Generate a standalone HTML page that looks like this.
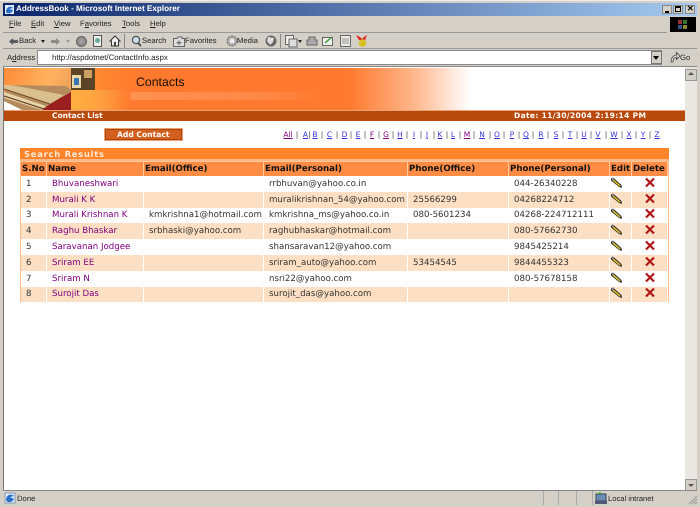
<!DOCTYPE html>
<html><head><meta charset="utf-8"><title>AddressBook</title>
<style>
html,body{margin:0;padding:0;width:700px;height:507px;overflow:hidden;background:#d4d0c8}
body{position:relative;font-family:"Liberation Sans",sans-serif;font-size:7.7px;color:#222;text-rendering:geometricPrecision}
#w{position:absolute;left:0;top:0;width:700px;height:507px;filter:blur(.3px)}
.a{position:absolute}
.t{position:absolute;white-space:nowrap;line-height:10px}
.v{font-family:"DejaVu Sans",sans-serif}
.l{position:absolute;top:130px;font:7.5px/10px "DejaVu Sans",sans-serif;color:#3333dd;text-decoration:underline;transform:translateX(-50%)}
.p{color:#800080}
.s{position:absolute;top:130px;font:7.5px/10px "DejaVu Sans",sans-serif;color:#444;transform:translateX(-50%)}
table{position:absolute;left:21px;top:161px;width:647px;border-collapse:separate;border-spacing:0;table-layout:fixed;font:8.65px "DejaVu Sans",sans-serif;color:#333}
th{background:#ff8c44;color:#111;height:14px;padding:0 0 0 1px;text-align:left;font-size:8.65px;font-weight:bold;border-right:1px solid #ffc79a;border-top:1px solid #ffc79a;white-space:nowrap;overflow:hidden}
td{height:15.8px;padding:0 0 0 5px;border-right:1px solid #fff;white-space:nowrap;overflow:hidden;box-sizing:border-box}
tr.o td{background:#fff}tr.e td{background:#fde0c3}
td.n{color:#800080}
td.i{padding:0;position:relative}
td svg{display:block}
</style></head><body><div id="w">
<svg width="0" height="0" style="position:absolute"><defs>
<symbol id="pen" viewBox="0 0 14 14"><path d="M1 1.5 L3 .5 L11.5 8 L12 11 L9 10 L1 3.5Z" fill="#333"/><path d="M3.5 2.5 L10.5 8.5 L9.5 9.5 L2.5 3.5Z" fill="#e8c820"/><path d="M1.5 2 L3 1 L4 2 L2.5 3Z" fill="#9ab"/></symbol>
<symbol id="del" viewBox="0 0 36 14"><path d="M14 1.5 L22 9.5 M22 1.5 L14 9.5" stroke="#b01818" stroke-width="2.2"/></symbol>
</defs></svg>
<!-- window frame -->
<div class="a" style="left:0;top:0;width:700px;height:1px;background:#eee"></div>
<div class="a" style="left:3px;top:3px;width:694px;height:13px;background:linear-gradient(90deg,#0a246a,#a6caf0)"></div>
<svg class="a" style="left:4px;top:4px" width="11" height="11" viewBox="0 0 11 11"><rect x="1" y="1" width="9" height="9" fill="#dfeefc"/><path d="M2 8 C2 3 7 1 9 4 L5 5 L9 6 C8 10 3 10 2 8Z" fill="#2a6fc9"/></svg>
<div class="t" style="left:16px;top:4px;color:#fff;font-weight:bold;font-size:8.15px">AddressBook - Microsoft Internet Explorer</div>
<div class="a" style="left:662px;top:5px;width:10px;height:9px;background:#d4d0c8;border:1px solid #888;box-sizing:border-box"><div class="a" style="left:2px;top:5px;width:4px;height:2px;background:#000"></div></div>
<div class="a" style="left:673px;top:5px;width:10px;height:9px;background:#d4d0c8;border:1px solid #888;box-sizing:border-box"><div class="a" style="left:1px;top:0;width:6px;height:6px;border:1px solid #000;border-top-width:2px;box-sizing:border-box"></div></div>
<div class="a" style="left:685px;top:5px;width:10px;height:9px;background:#d4d0c8;border:1px solid #888;box-sizing:border-box"></div>
<div class="t" style="left:687px;top:4px;font-size:8px;font-weight:bold;color:#000">✕</div>

<!-- menu -->
<div class="t" style="left:9px;top:19px"><u>F</u>ile</div>
<div class="t" style="left:31px;top:19px"><u>E</u>dit</div>
<div class="t" style="left:54px;top:19px"><u>V</u>iew</div>
<div class="t" style="left:80px;top:19px">F<u>a</u>vorites</div>
<div class="t" style="left:122px;top:19px"><u>T</u>ools</div>
<div class="t" style="left:150px;top:19px"><u>H</u>elp</div>
<div class="a" style="left:3px;top:32px;width:664px;height:1px;background:#999"></div>
<div class="a" style="left:670px;top:17px;width:26px;height:15px;background:#000"></div>
<div class="a" style="left:678px;top:20px;width:4px;height:4px;background:#933"></div>
<div class="a" style="left:683px;top:20px;width:4px;height:4px;background:#373"></div>
<div class="a" style="left:678px;top:25px;width:4px;height:4px;background:#358"></div>
<div class="a" style="left:683px;top:25px;width:4px;height:4px;background:#883"></div>

<!-- toolbar -->
<svg class="a" style="left:9px;top:37px" width="10" height="9"><path d="M0 4.5 L4 1 V3 H9 V6 H4 V8Z" fill="#555" stroke="#89a" stroke-width=".4"/></svg>
<div class="t" style="left:19px;top:36px">Back</div>
<div class="a" style="left:41px;top:40px;border:2.5px solid transparent;border-top:3px solid #222"></div>
<svg class="a" style="left:51px;top:37px" width="10" height="9"><path d="M9 4.5 L5 1 V3 H0 V6 H5 V8Z" fill="#8a8a88"/></svg>
<div class="a" style="left:66px;top:40px;border:2.5px solid transparent;border-top:3px solid #999"></div>
<div class="a" style="left:76px;top:36px;width:11px;height:11px;border-radius:50%;background:radial-gradient(#aaa,#777);border:1px solid #666;box-sizing:border-box"></div>
<div class="a" style="left:93px;top:35px;width:9px;height:12px;background:#eee;border:1px solid #555;box-sizing:border-box"></div>
<div class="a" style="left:95px;top:38px;width:5px;height:5px;background:#6a9;border-radius:50%"></div>
<svg class="a" style="left:109px;top:35px" width="12" height="12"><path d="M1 6 L6 1 L11 6 H9.5 V11 H2.5 V6Z" fill="#eee" stroke="#333"/><rect x="5" y="7" width="2" height="4" fill="#444"/></svg>
<div class="a" style="left:124px;top:34px;width:1px;height:14px;background:#888"></div>
<svg class="a" style="left:130px;top:35px" width="12" height="12"><circle cx="6" cy="5" r="3.6" fill="#cde" stroke="#555" stroke-width="1.3"/><path d="M8 8 L11 11" stroke="#555" stroke-width="2"/></svg>
<div class="t" style="left:142px;top:36px">Search</div>
<svg class="a" style="left:173px;top:36px" width="12" height="11"><path d="M.5 2.5 H4 L5 1 H9 V2.5 H11.5 V10.5 H.5Z" fill="#ddd" stroke="#666"/><path d="M6 4 L7 6 H9 L7.5 7.5 L6 9 L4.5 7.5 L3 6 H5Z" fill="#777"/></svg>
<div class="t" style="left:185px;top:36px">Favorites</div>
<svg class="a" style="left:226px;top:35px" width="12" height="12"><circle cx="6" cy="6" r="5" fill="#aaa"/><circle cx="6" cy="6" r="2.5" fill="#eee"/><circle cx="6" cy="6" r="5" fill="none" stroke="#666" stroke-dasharray="2 1.2"/></svg>
<div class="t" style="left:237px;top:36px">Media</div>
<svg class="a" style="left:265px;top:35px" width="12" height="12"><circle cx="6" cy="6" r="5.5" fill="#666"/><path d="M3 2 L9 3 L8 7 L5 10 L2 6Z" fill="#ddd"/></svg>
<div class="a" style="left:280px;top:34px;width:1px;height:14px;background:#888"></div>
<svg class="a" style="left:285px;top:35px" width="13" height="13"><rect x=".5" y=".5" width="8" height="9" fill="#eee" stroke="#666"/><rect x="4" y="4" width="8" height="8" fill="#ddd" stroke="#666"/></svg>
<div class="a" style="left:298px;top:40px;border:2px solid transparent;border-top:3px solid #222"></div>
<svg class="a" style="left:306px;top:36px" width="12" height="11"><path d="M3 1 H9 V4 H11 V9 H1 V4 H3Z" fill="#aaa" stroke="#666"/></svg>
<svg class="a" style="left:322px;top:36px" width="12" height="11"><rect x=".5" y="1.5" width="10" height="8" fill="#eee" stroke="#666"/><path d="M3 7 L10 1" stroke="#393" stroke-width="1.4"/></svg>
<svg class="a" style="left:340px;top:35px" width="11" height="12"><rect x=".5" y=".5" width="10" height="11" fill="#e8e8e4" stroke="#666"/><path d="M2 4 H9 M2 6 H9 M2 8 H9" stroke="#999"/></svg>
<svg class="a" style="left:356px;top:35px" width="12" height="13"><path d="M0 0 L4 2 L6 4 L8 2 L11 0 L9 5 H3Z" fill="#d22"/><circle cx="6.5" cy="8" r="3.8" fill="#d8c020"/></svg>
<div class="a" style="left:3px;top:48px;width:694px;height:1px;background:#999"></div>

<!-- address -->
<div class="t" style="left:7px;top:53px">A<u>d</u>dress</div>
<div class="a" style="left:37px;top:50px;width:625px;height:15px;background:#fff;border:1px solid #888;border-right:none;box-sizing:border-box"></div>
<div class="t" style="left:52px;top:53px;font-size:7.9px">http://aspdotnet/ContactInfo.aspx</div>
<div class="a" style="left:651px;top:51px;width:11px;height:13px;background:#d4d0c8;border:1px solid #777;box-sizing:border-box"></div>
<div class="a" style="left:653px;top:56px;border:3px solid transparent;border-top:4px solid #000"></div>
<svg class="a" style="left:669px;top:51px" width="12" height="13"><path d="M2 11 C2 6 5 4 8 4 L7 1 L11 5 L7 9 L8 6 C5 6 4 8 4 11Z" fill="#ddd" stroke="#444" stroke-width=".8"/></svg>
<div class="t" style="left:680px;top:53px">Go</div>

<!-- page -->
<div class="a" style="left:3px;top:66px;width:694px;height:1px;background:#888"></div>
<div class="a" style="left:3px;top:67px;width:1px;height:424px;background:#777"></div>
<div class="a" style="left:4px;top:67px;width:681px;height:423px;background:#fff"></div>

<!-- banner -->
<div class="a" style="left:4px;top:68px;width:468px;height:42px;background:linear-gradient(90deg,#ff7a2e 0,#ff7a2e 345px,#ffb68c 410px,#fff 466px)"></div>
<div class="a" style="left:4px;top:68px;width:67px;height:42px;background:linear-gradient(110deg,#ff8a3a,#ffb25e 60%,#e89a58)"></div>
<div class="a" style="left:71px;top:90px;width:60px;height:20px;background:linear-gradient(90deg,#ffb040,#ffa040 50%,#ff7a2e)"></div>
<div class="a" style="left:95px;top:68px;width:40px;height:22px;background:linear-gradient(90deg,#ff8a30,#ff7a2e)"></div>
<div class="a" style="left:130px;top:92px;width:190px;height:8px;background:linear-gradient(90deg,#ff9050,#ff8846 70%,#ff7a2e)"></div>
<svg class="a" style="left:4px;top:68px" width="67" height="42">
<path d="M0 42 V25 L7 17 L62 18 L67 22 V42Z" fill="#b58b5e"/>
<path d="M0 17 L7 17 L60 27 L46 36 L0 21Z" fill="#d9c08e"/>
<path d="M0 24 L42 38 L38 42 L0 30Z" fill="#e8d4a8"/>
<path d="M46 36 L67 24 V42 H38Z" fill="#9b1f1f"/>
<path d="M0 33 L18 42 H0Z" fill="#fff"/>
<path d="M0 28 L40 41" stroke="#6a4a2a" stroke-width="1.2"/>
<path d="M0 21 L46 36" stroke="#6a4a2a" stroke-width="1"/>
</svg>
<div class="a" style="left:71px;top:68px;width:24px;height:22px;background:#5c4325"></div>
<div class="a" style="left:72px;top:75px;width:9px;height:13px;background:#e8d9a8"></div>
<div class="a" style="left:74px;top:78px;width:5px;height:7px;background:#3a76b5"></div>
<div class="a" style="left:84px;top:70px;width:8px;height:8px;background:#c9a060"></div>
<div class="t" style="left:136px;top:77px;font-size:12.3px;line-height:11px;color:#1a1008">Contacts</div>
<div class="a" style="left:4px;top:110px;width:681px;background:#b84a0d;border-top:1px solid #e8a070;height:10px"></div>
<div class="t v" style="left:52px;top:111px;color:#fff;font-weight:bold;font-size:7.5px">Contact List</div>
<div class="t v" style="left:514px;top:111px;color:#fff;font-weight:bold;font-size:7.5px;letter-spacing:.34px">Date: 11/30/2004 2:19:14 PM</div>

<!-- add contact -->
<div class="a" style="left:104px;top:128px;width:79px;height:13px;background:#d4601f;border:1px solid #f0a070;box-sizing:border-box;outline:1px solid #a84510;outline-offset:-2px"></div>
<div class="t v" style="left:117px;top:130px;color:#fff;font-weight:bold;font-size:7.6px">Add Contact</div>

<!-- alphabet -->
<span class="l p" style="left:288px">All</span><span class="s" style="left:297px">|</span>
<span class="l" style="left:305.5px">A</span><span class="s" style="left:309.5px">|</span>
<span class="l" style="left:315px">B</span><span class="s" style="left:322px">|</span>
<span class="l" style="left:329.5px">C</span><span class="s" style="left:337px">|</span>
<span class="l" style="left:344.5px">D</span><span class="s" style="left:351px">|</span>
<span class="l" style="left:358px">E</span><span class="s" style="left:365px">|</span>
<span class="l p" style="left:372px">F</span><span class="s" style="left:379px">|</span>
<span class="l p" style="left:386px">G</span><span class="s" style="left:393px">|</span>
<span class="l" style="left:400px">H</span><span class="s" style="left:407px">|</span>
<span class="l" style="left:414px">I</span><span class="s" style="left:421px">|</span>
<span class="l" style="left:427px">J</span><span class="s" style="left:434px">|</span>
<span class="l" style="left:440px">K</span><span class="s" style="left:447px">|</span>
<span class="l" style="left:453px">L</span><span class="s" style="left:460px">|</span>
<span class="l p" style="left:467px">M</span><span class="s" style="left:474px">|</span>
<span class="l" style="left:482px">N</span><span class="s" style="left:490px">|</span>
<span class="l" style="left:497px">O</span><span class="s" style="left:504px">|</span>
<span class="l" style="left:512px">P</span><span class="s" style="left:519px">|</span>
<span class="l" style="left:526px">Q</span><span class="s" style="left:533px">|</span>
<span class="l" style="left:541px">R</span><span class="s" style="left:548px">|</span>
<span class="l" style="left:556px">S</span><span class="s" style="left:563px">|</span>
<span class="l" style="left:570px">T</span><span class="s" style="left:577px">|</span>
<span class="l" style="left:584px">U</span><span class="s" style="left:591px">|</span>
<span class="l" style="left:598px">V</span><span class="s" style="left:606px">|</span>
<span class="l" style="left:614px">W</span><span class="s" style="left:622px">|</span>
<span class="l" style="left:629px">X</span><span class="s" style="left:636px">|</span>
<span class="l" style="left:643px">Y</span><span class="s" style="left:650px">|</span>
<span class="l" style="left:657px">Z</span>

<!-- results -->
<div class="a" style="left:20px;top:148px;width:649px;height:154px;background:#ffb98a;border-bottom:1px solid #ff9a5a;box-sizing:border-box"></div>
<div class="a" style="left:20px;top:148px;width:649px;height:11px;background:#ff8429"></div>
<div class="t v" style="left:24px;top:149px;color:#ffe9d8;font-weight:bold;font-size:8.4px;letter-spacing:.75px">Search Results</div>
<table>
<colgroup><col style="width:26px"><col style="width:97px"><col style="width:120px"><col style="width:144px"><col style="width:101px"><col style="width:101px"><col style="width:22px"><col style="width:36px"></colgroup>
<tr><th>S.No</th><th>Name</th><th>Email(Office)</th><th>Email(Personal)</th><th>Phone(Office)</th><th>Phone(Personal)</th><th>Edit</th><th>Delete</th></tr>
<tr class="o"><td>1</td><td class="n">Bhuvaneshwari</td><td></td><td>rrbhuvan@yahoo.co.in</td><td></td><td>044-26340228</td><td class="i"><svg width="14" height="14"><use href="#pen"/></svg></td><td class="i"><svg width="36" height="14"><use href="#del"/></svg></td></tr>
<tr class="e"><td>2</td><td class="n">Murali K K</td><td></td><td>muralikrishnan_54@yahoo.com</td><td>25566299</td><td>04268224712</td><td class="i"><svg width="14" height="14"><use href="#pen"/></svg></td><td class="i"><svg width="36" height="14"><use href="#del"/></svg></td></tr>
<tr class="o"><td>3</td><td class="n">Murali Krishnan K</td><td>kmkrishna1@hotmail.com</td><td>kmkrishna_ms@yahoo.co.in</td><td>080-5601234</td><td>04268-224712111</td><td class="i"><svg width="14" height="14"><use href="#pen"/></svg></td><td class="i"><svg width="36" height="14"><use href="#del"/></svg></td></tr>
<tr class="e"><td>4</td><td class="n">Raghu Bhaskar</td><td>srbhaski@yahoo.com</td><td>raghubhaskar@hotmail.com</td><td></td><td>080-57662730</td><td class="i"><svg width="14" height="14"><use href="#pen"/></svg></td><td class="i"><svg width="36" height="14"><use href="#del"/></svg></td></tr>
<tr class="o"><td>5</td><td class="n">Saravanan Jodgee</td><td></td><td>shansaravan12@yahoo.com</td><td></td><td>9845425214</td><td class="i"><svg width="14" height="14"><use href="#pen"/></svg></td><td class="i"><svg width="36" height="14"><use href="#del"/></svg></td></tr>
<tr class="e"><td>6</td><td class="n">Sriram EE</td><td></td><td>sriram_auto@yahoo.com</td><td>53454545</td><td>9844455323</td><td class="i"><svg width="14" height="14"><use href="#pen"/></svg></td><td class="i"><svg width="36" height="14"><use href="#del"/></svg></td></tr>
<tr class="o"><td>7</td><td class="n">Sriram N</td><td></td><td>nsri22@yahoo.com</td><td></td><td>080-57678158</td><td class="i"><svg width="14" height="14"><use href="#pen"/></svg></td><td class="i"><svg width="36" height="14"><use href="#del"/></svg></td></tr>
<tr class="e"><td>8</td><td class="n">Surojit Das</td><td></td><td>surojit_das@yahoo.com</td><td></td><td></td><td class="i"><svg width="14" height="14"><use href="#pen"/></svg></td><td class="i"><svg width="36" height="14"><use href="#del"/></svg></td></tr>
</table>

<!-- scrollbar -->
<div class="a" style="left:685px;top:67px;width:12px;height:423px;background:#ebe8e3"></div>
<div class="a" style="left:685px;top:69px;width:12px;height:12px;background:#d4d0c8;border:1px solid #999;box-sizing:border-box"></div>
<div class="a" style="left:688px;top:72px;border:3px solid transparent;border-bottom:3px solid #555;border-top:0"></div>
<div class="a" style="left:685px;top:479px;width:12px;height:12px;background:#d4d0c8;border:1px solid #999;box-sizing:border-box"></div>
<div class="a" style="left:688px;top:484px;border:3px solid transparent;border-top:3px solid #555;border-bottom:0"></div>

<!-- status bar -->
<div class="a" style="left:3px;top:490px;width:694px;height:1px;background:#888"></div>
<svg class="a" style="left:4px;top:492px" width="12" height="12"><rect x="1" y="1" width="10" height="10" fill="#dfeefc" stroke="#89a"/><path d="M2 8 C2 3 7 1 10 4 L6 5 L10 7 C8 11 3 11 2 8Z" fill="#2a6fc9"/></svg>
<div class="t" style="left:17px;top:494px">Done</div>
<div class="a" style="left:543px;top:491px;width:1px;height:14px;background:#aaa"></div>
<div class="a" style="left:558px;top:491px;width:1px;height:14px;background:#aaa"></div>
<div class="a" style="left:576px;top:491px;width:1px;height:14px;background:#aaa"></div>
<div class="a" style="left:592px;top:491px;width:1px;height:14px;background:#aaa"></div>
<svg class="a" style="left:595px;top:492px" width="12" height="13"><rect x="1" y="2" width="10" height="7" fill="#6b8db5" stroke="#345"/><rect x="0" y="9" width="12" height="3" fill="#557"/><path d="M2 2 L5 0 L7 2Z" fill="#3a3"/></svg>
<div class="t" style="left:608px;top:494px;font-size:7.6px">Local intranet</div>
<svg class="a" style="left:688px;top:495px" width="10" height="10"><path d="M9 1 L1 9 M9 4 L4 9 M9 7 L7 9" stroke="#999"/></svg>
</div></body></html>
